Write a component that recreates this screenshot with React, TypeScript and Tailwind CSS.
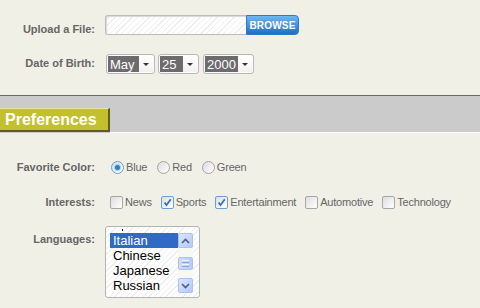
import React from "react";

const stripe =
  "bg-[repeating-linear-gradient(135deg,#ffffff_0px,#ffffff_3px,#eeeeee_3px,#eeeeee_4px)]";

function Select({ value, dark }: { value: string; dark: string }) {
  return (
    <div className="flex h-[20px] items-stretch rounded-[3px] border border-[#b9b9b9] bg-white p-[1px] shadow-[inset_0_0_1px_#ddd]">
      <div
        className={`${dark} flex items-center bg-[#6c6c6e] pl-[2px] text-[13px] leading-[15px] text-white`}
      >
        {value}
      </div>
      <div className="flex w-[14px] items-center justify-center bg-gradient-to-b from-white to-[#f1f1f1]">
        <div className="h-0 w-0 border-x-[3px] border-t-[3px] border-x-transparent border-t-[#333]" />
      </div>
    </div>
  );
}

function Radio({ checked, label }: { checked?: boolean; label: string }) {
  return (
    <div className="flex items-center">
      <div
        className={`flex h-[13px] w-[13px] items-center justify-center rounded-full border ${
          checked ? "border-[#6aa0cf]" : "border-[#a4a4a4]"
        } bg-gradient-to-br from-[#dcdcdc] to-white`}
      >
        {checked && (
          <div className="h-[5px] w-[5px] rounded-full bg-[#2b7fd2] shadow-[0_0_1px_1px_#a9cdf0]" />
        )}
      </div>
      <span className="ml-[2px] text-[11px] leading-[13px] tracking-[-0.2px] text-[#666]">
        {label}
      </span>
    </div>
  );
}

function Check({ checked, label }: { checked?: boolean; label: string }) {
  return (
    <div className="flex items-center">
      <div
        className={`relative h-[13px] w-[13px] rounded-[2px] border ${
          checked ? "border-[#6a9fd0]" : "border-[#a7a7a7]"
        } bg-gradient-to-br from-[#dedede] to-white`}
      >
        {checked && (
          <svg
            viewBox="0 0 11 11"
            className="absolute left-0 top-0 h-[11px] w-[11px]"
          >
            <path
              d="M2.5 5.5 L4.5 8 L8.8 2.2"
              fill="none"
              stroke="#2f73c4"
              strokeWidth="1.8"
            />
          </svg>
        )}
      </div>
      <span className="ml-[2px] text-[11px] leading-[13px] tracking-[-0.2px] text-[#666]">
        {label}
      </span>
    </div>
  );
}

function ScrollBtn({ up }: { up?: boolean }) {
  return (
    <div className="flex h-[15px] w-[15px] items-center justify-center rounded-[2px] border border-[#aec2ef] bg-gradient-to-br from-[#dbe6fd] to-[#b5c9f5]">
      <svg viewBox="0 0 9 6" className="h-[6px] w-[9px]">
        <path
          d={up ? "M1 5 L4.5 1.5 L8 5" : "M1 1 L4.5 4.5 L8 1"}
          fill="none"
          stroke="#4d6185"
          strokeWidth="1.7"
        />
      </svg>
    </div>
  );
}

export default function App() {
  return (
    <div className="h-[308px] w-[480px] overflow-hidden bg-[#f1f0e6] font-['Liberation_Sans',Arial,sans-serif]">
      {/* top section */}
      <div className="pt-[15px]">
        <div className="flex items-start">
          <div className="mt-[8px] w-[95px] text-right text-[11px] font-bold leading-[13px] text-[#666]">
            Upload a File:
          </div>
          <div className="ml-[10px] flex h-[20px]">
            <div
              className={`w-[141px] rounded-l-[3px] border border-r-0 border-[#bdbdbd] ${stripe} shadow-[inset_1px_1px_1px_#d8d8d8]`}
            />
            <div className="flex w-[53px] items-center justify-center rounded-r-[4px] border border-[#3079c4] bg-gradient-to-b from-[#6db7f1] to-[#1f6ec3] text-[10px] font-bold tracking-[0.2px] text-white">
              BROWSE
            </div>
          </div>
        </div>

        <div className="mt-[18px] flex items-start">
          <div className="mt-[3px] w-[95px] text-right text-[11px] font-bold leading-[13px] text-[#666]">
            Date of Birth:
          </div>
          <div className="ml-[11px] flex">
            <Select value="May" dark="w-[31px]" />
            <div className="ml-[3px]">
              <Select value="25" dark="w-[23px]" />
            </div>
            <div className="ml-[4px]">
              <Select value="2000" dark="w-[33px]" />
            </div>
          </div>
        </div>
      </div>

      {/* section header */}
      <div className="mt-[21px] h-[1px] bg-[#6a6a66]" />
      <div className="flex h-[37px] items-end bg-[#cbcbcb]">
        <div className="mb-[1px] flex h-[24px] w-[110px] items-center border-b-[2px] border-r-[2px] border-t border-b-[#5f5e1c] border-r-[#5f5e1c] border-t-[#e6e5a8] bg-[#c2c02d] pl-[5px] text-[16px] font-bold leading-[18px] text-white">
          Preferences
        </div>
        <div className="h-full flex-1 border-b border-white" />
      </div>

      {/* preferences */}
      <div className="mt-[28px] flex items-center">
        <div className="w-[95px] text-right text-[11px] font-bold leading-[13px] text-[#666]">
          Favorite Color:
        </div>
        <div className="ml-[16px] flex items-center gap-[10px]">
          <Radio checked label="Blue" />
          <Radio label="Red" />
          <Radio label="Green" />
        </div>
      </div>

      <div className="mt-[22px] flex items-center">
        <div className="w-[95px] text-right text-[11px] font-bold leading-[13px] text-[#666]">
          Interests:
        </div>
        <div className="ml-[15px] flex items-center gap-[9px]">
          <Check label="News" />
          <Check checked label="Sports" />
          <Check checked label="Entertainment" />
          <Check label="Automotive" />
          <Check label="Technology" />
        </div>
      </div>

      <div className="mt-[17px] flex items-start">
        <div className="mt-[7px] w-[95px] text-right text-[11px] font-bold leading-[13px] text-[#666]">
          Languages:
        </div>
        <div
          className={`ml-[10px] flex h-[72px] w-[95px] rounded-[3px] border border-[#b4b4b4] ${stripe} px-[4px]`}
        >
          <div className="mt-[2px] h-[64px] w-[68px]">
            <div className="ml-[12px] h-[2px] w-[1px] bg-black" />
            <div className="mt-[2px] text-[13px] leading-[15px] text-black">
              <div className="bg-[#316ac5] pl-[3px] text-white">Italian</div>
              <div className="pl-[3px]">Chinese</div>
              <div className="pl-[3px]">Japanese</div>
              <div className="pl-[3px]">Russian</div>
            </div>
          </div>
          <div className="mt-[6px] flex h-[60px] w-[15px] flex-col justify-between bg-[#f7f7f3]">
            <ScrollBtn up />
            <div className="flex h-[13px] w-[15px] flex-col items-center justify-center gap-[1px] rounded-[2px] border border-[#aec2ef] bg-gradient-to-r from-[#cfdcfc] to-[#b8ccf6]">
              <div className="h-[1px] w-[7px] bg-[#eef3fe]" />
              <div className="h-[1px] w-[7px] bg-[#8ea6dc]" />
              <div className="h-[1px] w-[7px] bg-[#eef3fe]" />
              <div className="h-[1px] w-[7px] bg-[#8ea6dc]" />
            </div>
            <ScrollBtn />
          </div>
        </div>
      </div>
    </div>
  );
}
